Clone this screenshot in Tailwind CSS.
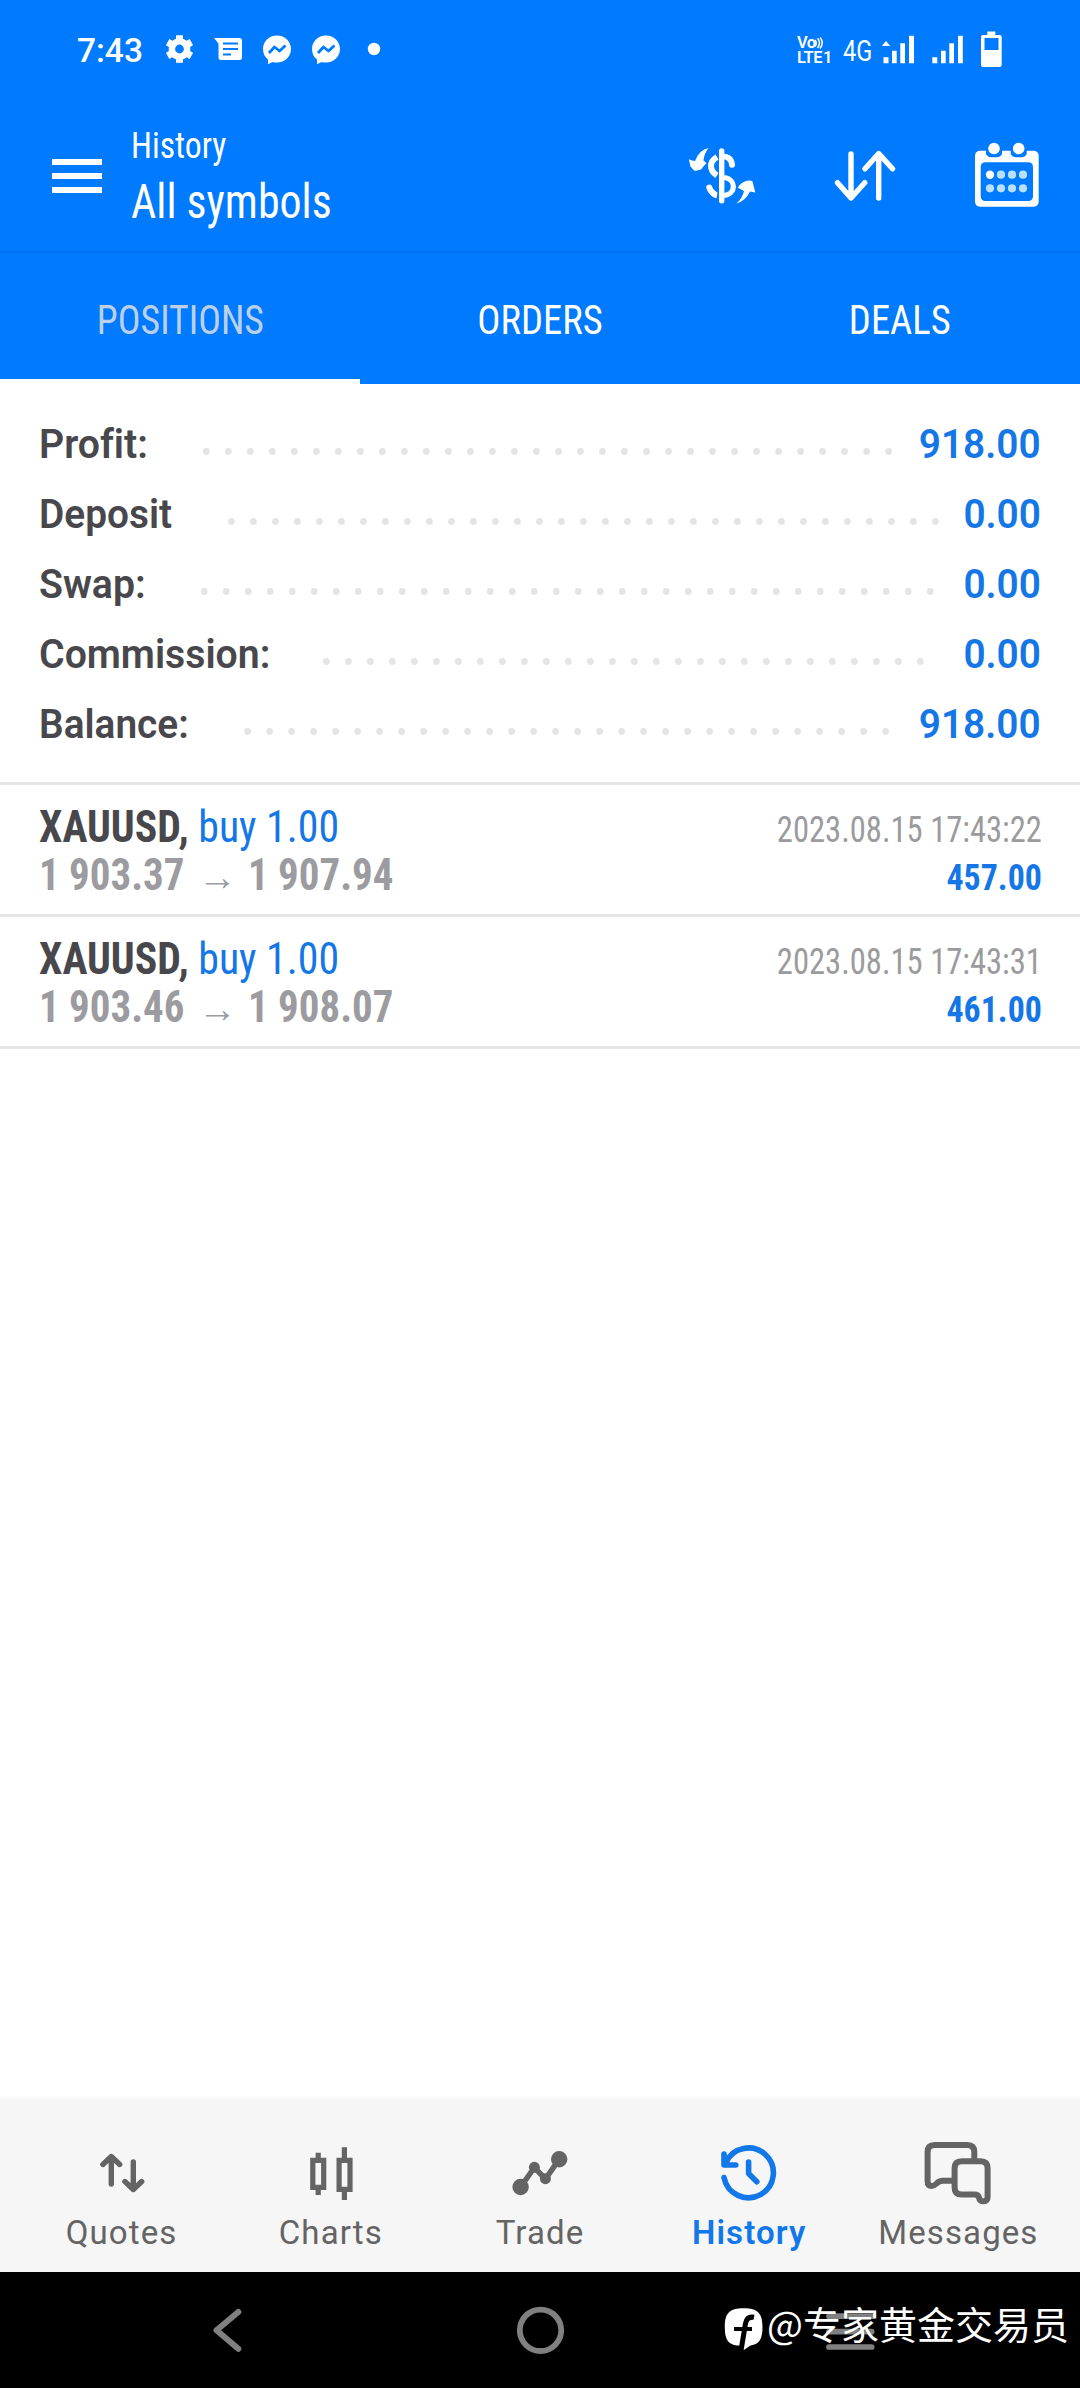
<!DOCTYPE html>
<html lang="en">
<head>
<meta charset="utf-8">
<meta name="viewport" content="width=1080">
<title>History</title>
<script src="https://cdn.jsdelivr.net/npm/@tailwindcss/browser@4"></script>
</head>
<body class="relative flex h-[2388px] w-[1080px] flex-col overflow-hidden bg-white font-['Roboto',sans-serif]">

<header class="h-[384px] shrink-0 bg-[#007aff] text-white">
  <!-- status bar -->
  <div class="flex h-[101px] items-center pl-[77px]">
    <span class="w-[89px] text-[33.500px] leading-[40px] font-medium">7:43</span>
    <svg class="h-[101px] w-[27px]" viewBox="166 0 27 101"><g fill="none" stroke="#fff"><circle cx="179.5" cy="49" r="7.6" stroke-width="6.4"/><path stroke-width="7" stroke-linejoin="round" d="M179.500 35.300v4M179.500 58.700v4M167.600 42.150l3.500 2M187.900 53.850l3.500 2M167.600 55.850l3.500-2M187.900 44.150l3.500-2"/></g></svg>
    <svg class="ml-[21px] h-[101px] w-[28px]" viewBox="214 0 28 101"><path fill="#fff" d="M214 38h25.500q2.500 0 2.500 2.500v17q0 2.500-2.500 2.500h-18.500q-2.500 0-2.500-2.500v-14z"/><path stroke="#007aff" stroke-width="2" d="M223 43.500h15M223 49h15M223 54.500h8"/></svg>
    <svg class="ml-[21px] h-[101px] w-[28px]" viewBox="263 0 28 101"><path fill="#fff" d="M277 35.500c8 0 14 6 14 13.500s-6 13.500-14 13.500q-2.500 0-4.500-.6l-4.500 2.300v-4.600c-3-2.300-5-6-5-10.600 0-7.500 6-13.500 14-13.500z"/><path fill="none" stroke="#007aff" stroke-width="2.800" stroke-linejoin="round" d="M269 53l5.500-6 5 4 6-5.500"/></svg>
    <svg class="ml-[21px] h-[101px] w-[28px]" viewBox="263 0 28 101"><path fill="#fff" d="M277 35.500c8 0 14 6 14 13.500s-6 13.500-14 13.500q-2.500 0-4.500-.6l-4.500 2.300v-4.600c-3-2.300-5-6-5-10.600 0-7.500 6-13.500 14-13.500z"/><path fill="none" stroke="#007aff" stroke-width="2.800" stroke-linejoin="round" d="M269 53l5.500-6 5 4 6-5.500"/></svg>
    <svg class="ml-[27px] h-[101px] w-[14px]" viewBox="367 0 14 101"><circle cx="374" cy="49" r="6.200" fill="#fff"/></svg>
    <div class="ml-[416px] flex h-[27px] w-[36px] -translate-y-[.5px] flex-col justify-between font-semibold">
      <div class="flex h-[12px] items-center text-[16.500px] leading-[12px]"><span class="tracking-[-.7px]">Vo</span><svg class="h-[13px] w-[9px]" viewBox="0 0 9 11" fill="none" stroke="#fff" stroke-width="1.500"><path d="M0 2.500q2.600 3 0 6.500M2.500 .8q4 4.700 0 9.700M5 0q4.500 5 0 11"/></svg></div>
      <div class="flex items-center text-[16.500px] leading-[12px] tracking-[-.5px]"><span>LTE</span><span class="ml-px">1</span></div>
    </div>
    <span class="ml-[10px] w-[39px] text-[29px] leading-[40px]"><span class="inline-block origin-left scale-x-[.81]">4G</span></span>
    <svg class="h-[101px] w-[33px]" viewBox="883 0 33 101" fill="#fff"><path d="M882.800 46l4.200-5 4.200 5zM884.500 57.200h5v6.100h-5zM893 50.700h4.700v12.600h-4.700zM901.300 43.300h4.700v20h-4.700zM910 35.700h5v27.600h-5z"/></svg>
    <svg class="ml-[17px] h-[101px] w-[32px]" viewBox="933 0 32 101" fill="#fff"><path d="M933.300 57.200h5v6.100h-5zM942 50.700h4.700v12.600h-4.700zM950.300 43.300h4.700v20h-4.700zM959 35.700h4.800v27.600h-4.800z"/></svg>
    <svg class="ml-[17px] h-[101px] w-[21px]" viewBox="982 0 21 101" fill="#fff"><path fill-rule="evenodd" d="M988.300 31.500h8v3.500h4.400q2 0 2 2v28q0 2-2 2h-16.700q-2 0-2-2v-28q0-2 2-2h4.300zM985.500 38v12h14v-12z"/></svg>
  </div>
  <!-- app bar -->
  <div class="flex h-[150px] pl-[52px]">
    <svg class="h-[150px] w-[50px]" viewBox="52 101 50 150"><path stroke="#fff" stroke-width="5.800" d="M52 162h50M52 176h50M52 190h50"/></svg>
    <div class="ml-[29px] flex w-[300px] flex-col gap-2 pt-[24.500px]">
      <div class="origin-left scale-x-[.925] text-[36.500px] leading-[40px] font-stretch-condensed">History</div>
      <div class="origin-left scale-x-[.905] text-[48.500px] leading-[56px] font-stretch-condensed">All symbols</div>
    </div>
    <svg class="ml-[255px] h-[150px] w-[72px]" viewBox="686 101 72 150">
      <g fill="none" stroke="#fff"><path stroke-width="5.400" stroke-linecap="round" d="M721.700 151v49.700"/><path stroke-width="6" d="M717 157q-6 3.500-6 9t6 9.500"/><path stroke-width="5.500" d="M724 156.500q5 .5 7 4"/><path stroke-width="6" stroke-linecap="round" d="M729 158.500q3 2.500 3 6.300M709.300 187.500q1.200 4 4.700 6.200"/><path stroke-width="6" d="M712 192.500q2.500 2.500 5 3"/><path stroke-width="5.200" d="M724 177.500c12.500 1.500 12.500 16.500 0 18"/></g>
      <path fill="#fff" d="M708.500 148q-4.500 6-5 12.500l3 2.800-3.500 3.500q-1 3-4 3.200-2.500 1.200-5 .6l-3.500-4-1.700-7.300q3.500 1.700 6.200 1.700 4.500-11.500 13.500-13zM736.500 203.500q6-5.500 7.500-12.500l-6.200-3.200q3-5.300 9.200-7 4-.8 5.500.7l2.800 11-5.300-1q-4.500 9.500-13.500 12z"/>
    </svg>
    <svg class="ml-[76px] h-[150px] w-[64px]" viewBox="834 101 64 150"><path fill="none" stroke="#fff" stroke-width="5.400" stroke-linecap="round" stroke-linejoin="round" d="M851 154v43.500M837.500 182.700l13.500 15.300 13.700-15.300M878.700 198v-43.500M865 168.800l13.700-15.300 13.800 15.300"/></svg>
    <svg class="ml-[76px] h-[150px] w-[66px]" viewBox="974 101 66 150">
      <rect x="975" y="150.700" width="63.700" height="56" rx="5" fill="#fff"/><rect x="980.700" y="162.300" width="52.300" height="38.700" rx="4.500" fill="#007aff"/>
      <path fill="#007aff" d="M986 146h16v8q-2 3.300-5 3.300h-6q-3 0-5-3.300zM1010.700 146h16v8q-2 3.300-5 3.300h-6q-3 0-5-3.300z"/>
      <g fill="#fff"><circle cx="994" cy="148.500" r="5.800"/><circle cx="1018.700" cy="148.500" r="5.800"/><circle cx="990" cy="174.700" r="4.200"/></g>
      <g fill="#b8e0ff"><circle cx="1001" cy="174.700" r="4.100"/><circle cx="1012" cy="174.700" r="4.100"/><circle cx="1023" cy="174.700" r="4.100"/><circle cx="990" cy="188.300" r="4.100"/><circle cx="1001" cy="188.300" r="4.100"/><circle cx="1012" cy="188.300" r="4.100"/><circle cx="1023" cy="188.300" r="4.100"/></g>
    </svg>
  </div>
  <!-- tabs -->
  <div class="grid h-[133px] grid-cols-3 border-t-2 border-[#0070ee] text-center text-[40px] leading-10 font-stretch-condensed">
    <div class="border-b-[5px] border-white pt-[47.500px] text-[#bdd0ea]"><span class="inline-block scale-x-[.945]">POSITIONS</span></div>
    <div class="pt-[47.500px]"><span class="inline-block scale-x-[.965]">ORDERS</span></div>
    <div class="pt-[47.500px]"><span class="inline-block scale-x-[.965]">DEALS</span></div>
  </div>
</header>

<!-- account summary -->
<section class="h-[401px] shrink-0 border-b-[3px] border-[#e4e4e5] pt-[25.500px] pr-[39px] pl-[39px] text-[40px] leading-[70px] font-[650] text-[#48484c] [font-variant-ligatures:none]">
  <div class="flex h-[70px]"><div class="w-[163px]"><span class="inline-block origin-left scale-x-[.98]">Profit:</span></div><svg class="h-[70px] w-[692px]" fill="none" stroke="#e4e4e5" stroke-width="6.800" stroke-linecap="round"><path stroke-dasharray="0 22.010" d="M4.300 41.500h683"/></svg><span class="ml-auto origin-right scale-x-[.97] text-[#1576e6]">918.00</span></div>
  <div class="flex h-[70px]"><div class="w-[188px]"><span class="inline-block origin-left scale-x-[.97]">Deposit</span></div><svg class="h-[70px] w-[713px]" fill="none" stroke="#e4e4e5" stroke-width="6.800" stroke-linecap="round"><path stroke-dasharray="0 22" d="M4.400 41.500h704.500"/></svg><span class="ml-auto origin-right scale-x-[.97] text-[#1576e6]">0.00</span></div>
  <div class="flex h-[70px]"><div class="w-[161px]"><span class="inline-block origin-left scale-x-[.98]">Swap:</span></div><svg class="h-[70px] w-[735px]" fill="none" stroke="#e4e4e5" stroke-width="6.800" stroke-linecap="round"><path stroke-dasharray="0 22" d="M4.200 41.500h726.500"/></svg><span class="ml-auto origin-right scale-x-[.97] text-[#1576e6]">0.00</span></div>
  <div class="flex h-[70px]"><div class="w-[283px]"><span class="inline-block origin-left scale-x-[.98]">Commission:</span></div><svg class="h-[70px] w-[603px]" fill="none" stroke="#e4e4e5" stroke-width="6.800" stroke-linecap="round"><path stroke-dasharray="0 22" d="M4.400 41.500h594.500"/></svg><span class="ml-auto origin-right scale-x-[.97] text-[#1576e6]">0.00</span></div>
  <div class="flex h-[70px]"><div class="w-[204px]"><span class="inline-block origin-left scale-x-[.97]">Balance:</span></div><svg class="h-[70px] w-[647px]" fill="none" stroke="#e4e4e5" stroke-width="6.800" stroke-linecap="round"><path stroke-dasharray="0 22" d="M4.600 41.500h638.500"/></svg><span class="ml-auto origin-right scale-x-[.97] text-[#1576e6]">918.00</span></div>
</section>

<!-- closed positions -->
<main class="font-stretch-condensed">
  <div class="flex h-[132px] justify-between border-b-[3px] border-[#e4e4e5] pt-[18px] pr-[38px] pl-[39px]">
    <div class="text-[44px] leading-[48px]">
      <div class="origin-left scale-x-[.95] font-bold whitespace-nowrap text-[#48484c]">XAUUSD, <span class="font-normal text-[#1576e6]">buy 1.00</span></div>
      <div class="flex h-12 font-bold text-[#9b9ba0]"><span class="w-[159px]"><span class="inline-block origin-left scale-x-[.93]">1 903.37</span></span><span class="w-[50px] font-['Liberation_Sans'] text-[39px] leading-[51px] font-normal">→</span><span class="inline-block origin-left scale-x-[.93]">1 907.94</span></div>
    </div>
    <div class="pt-[3px] text-right text-[36px] leading-[48px]">
      <div class="origin-right scale-x-[.905] text-[#9b9b9e]">2023.08.15 17:43:22</div>
      <div class="origin-right scale-x-[.94] font-bold text-[#1576e6]">457.00</div>
    </div>
  </div>
  <div class="flex h-[132px] justify-between border-b-[3px] border-[#e4e4e5] pt-[18px] pr-[38px] pl-[39px]">
    <div class="text-[44px] leading-[48px]">
      <div class="origin-left scale-x-[.95] font-bold whitespace-nowrap text-[#48484c]">XAUUSD, <span class="font-normal text-[#1576e6]">buy 1.00</span></div>
      <div class="flex h-12 font-bold text-[#9b9ba0]"><span class="w-[159px]"><span class="inline-block origin-left scale-x-[.93]">1 903.46</span></span><span class="w-[50px] font-['Liberation_Sans'] text-[39px] leading-[51px] font-normal">→</span><span class="inline-block origin-left scale-x-[.93]">1 908.07</span></div>
    </div>
    <div class="pt-[3px] text-right text-[36px] leading-[48px]">
      <div class="origin-right scale-x-[.905] text-[#9b9b9e]">2023.08.15 17:43:31</div>
      <div class="origin-right scale-x-[.94] font-bold text-[#1576e6]">461.00</div>
    </div>
  </div>
</main>

<!-- bottom navigation -->
<nav class="mt-auto flex h-[173px] shrink-0 bg-[#f6f6f6] px-[17px] text-[33px] leading-10 tracking-[1.100px] text-[#646464] shadow-[0_-1px_5px_rgba(0,0,0,.04)]">
  <div class="flex flex-1 flex-col items-center"><svg class="h-[114px] w-[80px]" viewBox="81.600 2099 80 114"><path fill="none" stroke="currentColor" stroke-width="5.400" stroke-linecap="round" stroke-linejoin="round" d="M110.900 2184v-27M102.500 2164.500l8.400-8 8.400 8M132.900 2162v27M124.500 2181.500l8.400 8 8.400-8"/></svg><span>Quotes</span></div>
  <div class="flex flex-1 flex-col items-center"><svg class="h-[114px] w-[80px]" viewBox="290.800 2099 80 114"><path fill="none" stroke="currentColor" stroke-width="5.200" d="M312.600 2160.300h10.900v27.100h-10.900zM338.900 2160.300h10.900v29h-10.900zM318 2152.700v7.600M318 2187.400v7.600M344.200 2147.300v13M344.200 2189.300v10.700"/></svg><span>Charts</span></div>
  <div class="flex flex-1 flex-col items-center"><svg class="h-[114px] w-[80px]" viewBox="500 2099 80 114"><path fill="none" stroke="currentColor" stroke-width="5.500" d="M520.600 2187l13.800-19.500 11 11.500 13.800-19.700"/><g fill="currentColor"><circle cx="520.600" cy="2187" r="8.200"/><circle cx="534.400" cy="2167.300" r="5.500"/><circle cx="545.400" cy="2178.700" r="5.500"/><circle cx="559.200" cy="2159.300" r="8.200"/></g></svg><span>Trade</span></div>
  <div class="flex flex-1 flex-col items-center text-[#1278ea]"><svg class="h-[114px] w-[80px]" viewBox="709.200 2099 80 114"><path fill="none" stroke="currentColor" stroke-width="5.600" stroke-linecap="round" stroke-linejoin="round" d="M724.200 2177.500a24.900 24.900 0 1 0 1.800-15M724.200 2154v11h11.800M748.800 2162v11.500l8.200 8.300"/></svg><span class="font-semibold">History</span></div>
  <div class="flex flex-1 flex-col items-center"><svg class="h-[114px] w-[80px]" viewBox="918.400 2099 80 114"><path fill="none" stroke="currentColor" stroke-width="6" d="M974.700 2160v-8q0-7-7-7h-32.700q-7 0-7 7v29q0 5 4 5 2.500 0 5-2.500 2.500-2.700 6-2.700h10M962 2161.300h19q7 0 7 7v28.500q0 4.500-4 4.500t-4.500-3.500q-1-3.300-4.500-3.300h-13q-7 0-7-7v-19.200q0-7 7-7z"/></svg><span>Messages</span></div>
</nav>

<!-- system navigation -->
<footer class="relative h-[116px] shrink-0 bg-black">
  <div class="flex h-[116px] items-center pl-[212px]">
    <svg class="h-[116px] w-[30px]" viewBox="212 2272 30 116"><path fill="none" stroke="#808080" stroke-width="6" stroke-linecap="round" stroke-linejoin="round" d="M238.300 2312l-21.800 18.300 21.800 18.500"/></svg>
    <svg class="ml-[273px] h-[116px] w-[50px]" viewBox="515 2272 50 116"><circle cx="540.500" cy="2330.300" r="20.700" fill="none" stroke="#808080" stroke-width="5.800"/></svg>
    <svg class="ml-[261px] h-[116px] w-[49px]" viewBox="826 2272 49 116"><path stroke="#808080" stroke-width="5.700" stroke-linecap="round" d="M829 2316.200h42.700M829 2331.700h42.700M829 2347h42.700"/></svg>
  </div>
  <div class="absolute top-0 left-[724px] flex whitespace-nowrap text-white">
    <svg class="h-[116px] w-[40px]" viewBox="724 2272 40 116"><path fill="#fff" d="M743.700 2308.300c14 0 18.800 5 18.800 18.800 0 12-3 17-12 18.500l-7 4.600-1-4.200c-13.700 0-17.700-5-17.700-18.900s4.500-18.800 18.900-18.800z"/><path fill="none" stroke="#000" stroke-width="5" d="M754 2317.300q-7-1.300-8.500 6.200l-4.500 27"/><path stroke="#000" stroke-width="4" d="M734 2329h18"/></svg>
    <span class="ml-[3px] pt-[30.500px] font-['Noto_Sans_CJK_SC',sans-serif] text-[38px] leading-[40px]">@专家黄金交易员</span>
  </div>
</footer>
</body>
</html>
